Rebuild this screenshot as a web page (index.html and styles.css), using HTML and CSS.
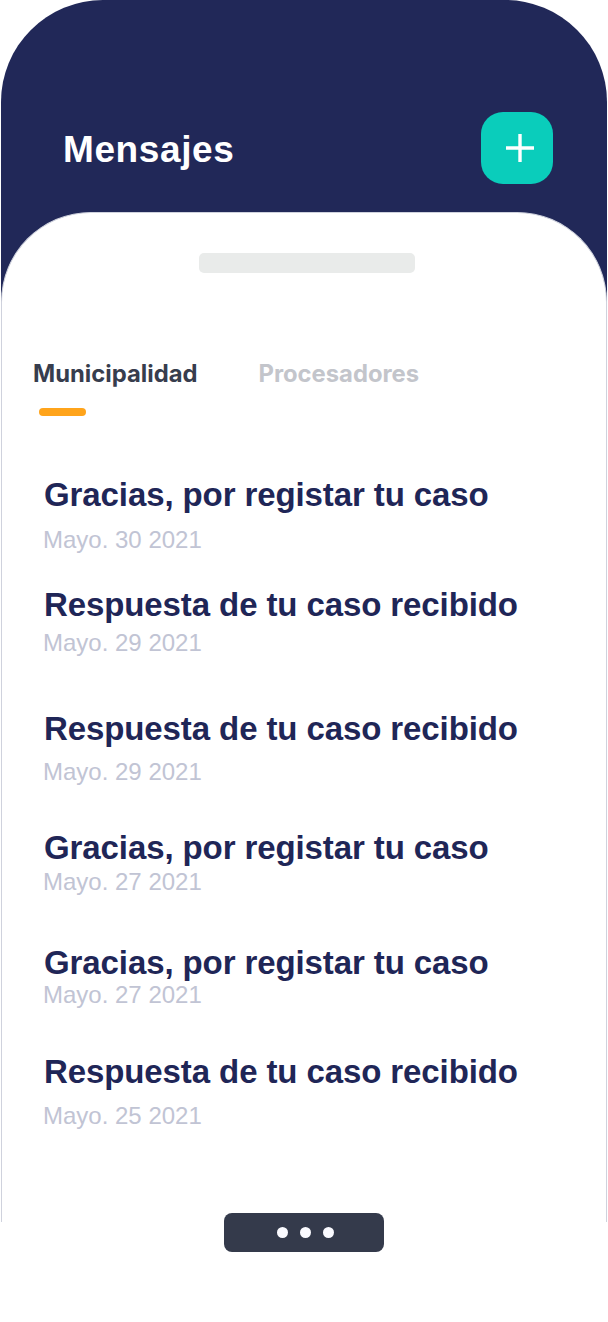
FILE: index.html
```html
<!DOCTYPE html>
<html lang="es">
<head>
<meta charset="utf-8">
<title>Mensajes</title>
<link rel="stylesheet" href="styles.css">
</head>
<body>
<div class="phone">
  <header class="header">
    <h1 class="header__title">Mensajes</h1>
    <button class="add-btn" aria-label="Nuevo mensaje">
      <svg width="28" height="28" viewBox="0 0 28 28"><path d="M14 0V28M0 14H28" stroke="#fff" stroke-width="3.4" fill="none"/></svg>
    </button>
  </header>
  <main class="card">
    <div class="grabber"></div>
    <nav class="tabs">
      <div class="tab tab--active">Municipalidad<span class="tab__bar"></span></div>
      <div class="tab">Procesadores</div>
    </nav>
    <ul class="messages">
      <li class="msg msg--g11"><h2 class="msg__title">Gracias, por registar tu caso</h2><p class="msg__date">Mayo. 30 2021</p></li>
      <li class="msg msg--t31 msg--g4"><h2 class="msg__title">Respuesta de tu caso recibido</h2><p class="msg__date">Mayo. 29 2021</p></li>
      <li class="msg msg--t52 msg--g9"><h2 class="msg__title">Respuesta de tu caso recibido</h2><p class="msg__date">Mayo. 29 2021</p></li>
      <li class="msg msg--t42 msg--g0"><h2 class="msg__title">Gracias, por registar tu caso</h2><p class="msg__date">Mayo. 27 2021</p></li>
      <li class="msg msg--t47 msg--gm2"><h2 class="msg__title">Gracias, por registar tu caso</h2><p class="msg__date">Mayo. 27 2021</p></li>
      <li class="msg msg--t43 msg--g10"><h2 class="msg__title">Respuesta de tu caso recibido</h2><p class="msg__date">Mayo. 25 2021</p></li>
    </ul>
  </main>
</div>
<div class="pager"><span class="dot"></span><span class="dot"></span><span class="dot"></span></div>
</body>
</html>
```
FILE: styles.css
```css
* { box-sizing: border-box; }
html, body { margin: 0; padding: 0; background: #fff; }
body { font-family: "Liberation Sans", Arial, sans-serif; }

.phone {
  width: 606px;
  height: 1222px;
  margin-left: 1px;
  background: #212858;
  border-radius: 102px 102px 0 0;
  display: flex;
  flex-direction: column;
}

.header {
  height: 212px;
  padding: 112px 54px 0 62px;
  display: flex;
  align-items: flex-start;
  justify-content: space-between;
}
.header__title {
  margin: 0;
  height: 72px;
  line-height: 76px;
  color: #fff;
  font-size: 37px;
  font-weight: 700;
  letter-spacing: 0.6px;
}
.add-btn {
  width: 72px;
  height: 72px;
  border: 0;
  padding: 0 0 0 5px;
  border-radius: 22px;
  background: #0acdbb;
  display: flex;
  align-items: center;
  justify-content: center;
}
.add-btn svg { display: block; }

.card {
  flex: 1;
  background: #fff;
  border: 1px solid #cfd2dd;
  border-bottom: 0;
  border-radius: 90px 90px 0 0;
  display: flex;
  flex-direction: column;
}

.grabber {
  width: 216px;
  height: 20px;
  margin: 40px 0 0 197px;
  background: #e9ebea;
  border-radius: 5px;
}

.tabs {
  display: flex;
  gap: 61px;
  margin: 86px 0 0 31px;
}
.tab {
  position: relative;
  font-family: Inter, "Liberation Sans", sans-serif;
  font-size: 23.8px;
  font-weight: 700;
  line-height: 30px;
  color: #c3c5cb;
}
.tab--active { color: #373d4d; }
.tab__bar {
  position: absolute;
  left: 6px;
  top: 49px;
  width: 47px;
  height: 8px;
  border-radius: 4px;
  background: #ffa41b;
}

.messages {
  list-style: none;
  margin: 86px 0 0;
  padding: 0 0 0 42px;
}
.msg__title {
  margin: 0;
  color: #1f2657;
  font-size: 33px;
  line-height: 40px;
  font-weight: 700;
  letter-spacing: -0.1px;
}
.msg__date {
  margin: 11px 0 0 -1px;
  color: #c1c4d4;
  font-size: 24px;
  line-height: 28px;
}
.msg--g11 .msg__date { margin-top: 11px; }
.msg--g10 .msg__date { margin-top: 10px; }
.msg--g9 .msg__date { margin-top: 9px; }
.msg--g4 .msg__date { margin-top: 4px; }
.msg--g0 .msg__date { margin-top: 0; }
.msg--gm2 .msg__date { margin-top: -2px; }
.msg--t31 { margin-top: 31px; }
.msg--t52 { margin-top: 52px; }
.msg--t42 { margin-top: 42px; }
.msg--t47 { margin-top: 47px; }
.msg--t43 { margin-top: 43px; }

.pager {
  position: relative;
  width: 160px;
  height: 39px;
  margin: -9px 0 0 224px;
  background: #343a4b;
  border-radius: 8px;
  display: flex;
  align-items: center;
  justify-content: center;
  gap: 12px;
  padding-left: 2px;
}
.dot {
  width: 11px;
  height: 11px;
  border-radius: 50%;
  background: #fafaff;
}
```
